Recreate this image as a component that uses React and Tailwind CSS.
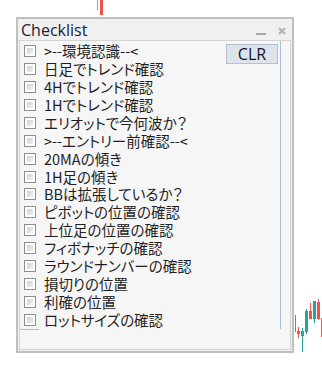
import React from 'react';

const items = [
  '>--環境認識--<',
  '日足でトレンド確認',
  '4Hでトレンド確認',
  '1Hでトレンド確認',
  'エリオットで今何波か？',
  '>--エントリー前確認--<',
  '20MAの傾き',
  '1H足の傾き',
  'BBは拡張しているか？',
  'ピボットの位置の確認',
  '上位足の位置の確認',
  'フィボナッチの確認',
  'ラウンドナンバーの確認',
  '損切りの位置',
  '利確の位置',
  'ロットサイズの確認',
];

// candles peeking out behind the panel
const candles = [
  { x: 295, w: 1, wick: [315, 332], body: [315, 332], up: false },
  { x: 297, w: 3, wick: [327, 338], body: [331, 334], up: false },
  { x: 301, w: 3, wick: [328, 352], body: [331, 336], up: true },
  { x: 305, w: 3, wick: [309, 334], body: [311, 332], up: true },
  { x: 309, w: 3, wick: [303, 319], body: [311, 319], up: false },
  { x: 313, w: 3, wick: [301, 323], body: [301, 319], up: true },
  { x: 317, w: 3, wick: [299, 320], body: [302, 319], up: false },
  { x: 321, w: 1, wick: [318, 337], body: [318, 337], up: false },
];

function Chart() {
  return (
    <svg className="absolute inset-0" width="322" height="367" viewBox="0 0 322 367">
      <rect x="97" y="0" width="1" height="10" fill="#f08080" />
      <rect x="100" y="0" width="3" height="15" fill="#ef5350" />
      {candles.map((c, i) => {
        const col = c.up ? '#26a69a' : '#ef5350';
        const mid = c.x + Math.floor(c.w / 2);
        return (
          <g key={i}>
            <rect x={mid} y={c.wick[0]} width="1" height={c.wick[1] - c.wick[0]} fill={col} />
            <rect x={c.x} y={c.body[0]} width={c.w} height={c.body[1] - c.body[0]} fill={col} />
          </g>
        );
      })}
    </svg>
  );
}

function Box() {
  return (
    <div className="w-[12px] h-[12px] border border-[#8e8e8e] bg-white p-[2px] shrink-0">
      <div className="w-full h-full bg-gradient-to-br from-[#d2d2d2] to-[#f0f0f0]" />
    </div>
  );
}

export default function App() {
  return (
    <div className="relative w-[322px] h-[367px] bg-white overflow-hidden">
      <Chart />
      <div className="relative ml-[16px] mt-[17px] w-[278px] h-[336px] border-2 border-[#c0c0c0] bg-[#f0f0f0] flex flex-col">
        {/* title bar */}
        <div className="h-[21px] flex items-end justify-between pl-[3px] pr-[6px]">
          <span className="text-[16px] leading-[20px] text-[#1c1c38] font-['Open_Sans',sans-serif]">Checklist</span>
          <div className="flex items-center gap-[12px] pb-[5px]">
            <div className="w-[10px] h-[2px] bg-[#a8a8a8] mt-[6px]" />
            <svg width="8" height="8" viewBox="0 0 8 8">
              <path d="M1 1L7 7M7 1L1 7" stroke="#b0b0b0" strokeWidth="2" />
            </svg>
          </div>
        </div>
        {/* body */}
        <div className="flex-1 ml-[1px] mr-[1px] mb-[1px] border border-[#d4d4d4] bg-[#f6f6f6] flex flex-col">
          <div className="h-[288px] mr-[9px] border-r border-[#a9bfd6] flex">
            <div className="flex-1 pt-[1px] pl-[4px] flex flex-col">
              {items.map((t, i) => (
                <div key={i} className="h-[18.13px] flex items-center gap-[8px]">
                  <Box />
                  <span className="text-[14.5px] leading-[16px] whitespace-nowrap text-[#1e1e1e] [font-feature-settings:'palt'] font-['Noto_Sans_CJK_JP','Noto_Sans',sans-serif]">
                    {t}
                  </span>
                </div>
              ))}
            </div>
            <button className="self-start mt-[3px] mr-[2px] w-[52px] h-[20px] border border-[#b4c0cc] bg-[#dde3ea] text-[16px] leading-none text-[#141428] font-['Open_Sans',sans-serif]">
              CLR
            </button>
          </div>
          <div className="w-[19px] h-px bg-[#a9bfd6]" />
        </div>
      </div>
    </div>
  );
}
